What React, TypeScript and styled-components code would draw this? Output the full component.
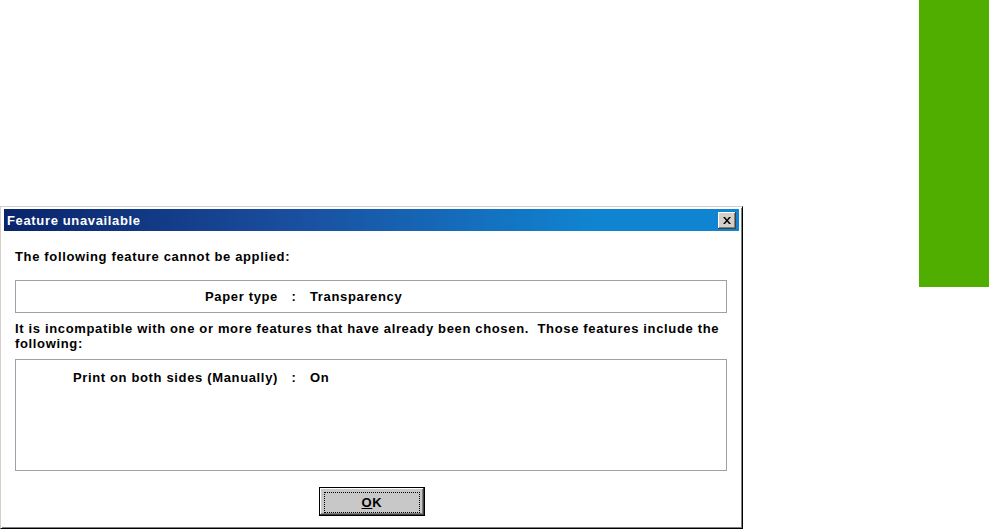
import styled, { createGlobalStyle } from 'styled-components';

const GlobalStyle = createGlobalStyle`
  html, body {
    margin: 0;
    padding: 0;
    background: #ffffff;
  }
  body {
    font-family: "Liberation Sans", Arial, sans-serif;
  }
`;

type Row = { label: string; value: string };

const chosen: Row[] = [{ label: 'Print on both sides (Manually)', value: 'On' }];

export default function App() {
  return (
    <>
      <GlobalStyle />
      <Page>
        <DialogColumn>
          <Dialog>
            <TitleBar>
              <TitleText>Feature unavailable</TitleText>
              <CloseButton type="button" aria-label="close">
                <svg width="8" height="7" viewBox="0 0 8 7">
                  <path d="M0 0h2l2 2.5L6 0h2L5 3.5 8 7H6L4 4.5 2 7H0l3-3.5z" fill="#000" />
                </svg>
              </CloseButton>
            </TitleBar>
            <Body>
              <Message>The following feature cannot be applied:</Message>
              <FeatureBox $height={33} $top={16} $pad={8}>
                <FeatureRow>
                  <Label>Paper type</Label>
                  <Colon>:</Colon>
                  <Value>Transparency</Value>
                </FeatureRow>
              </FeatureBox>
              <Message $top={8}>
                It is incompatible with one or more features that have already been chosen.&nbsp; Those features include the
                <br />
                following:
              </Message>
              <FeatureBox $height={112} $top={8} $pad={10}>
                {chosen.map((row) => (
                  <FeatureRow key={row.label}>
                    <Label>{row.label}</Label>
                    <Colon>:</Colon>
                    <Value>{row.value}</Value>
                  </FeatureRow>
                ))}
              </FeatureBox>
              <ButtonRow>
                <OkButton type="button">
                  <FocusRing>
                    <u>O</u>K
                  </FocusRing>
                </OkButton>
              </ButtonRow>
            </Body>
          </Dialog>
        </DialogColumn>
        <SideTab />
      </Page>
    </>
  );
}

const Page = styled.div`
  display: flex;
  width: 989px;
  height: 529px;
  overflow: hidden;
`;

const DialogColumn = styled.div`
  padding-top: 206px;
`;

const Dialog = styled.div`
  box-sizing: border-box;
  width: 743px;
  height: 323px;
  background: #ffffff;
  border-top: 1px solid #d4d0c8;
  border-left: 1px solid #d4d0c8;
  border-right: 1px solid #000000;
  border-bottom: 1px solid #000000;
  box-shadow: inset 1px 1px 0 #ffffff, inset -1px -1px 0 #808080;
  padding: 2px 3px 3px 3px;
  display: flex;
  flex-direction: column;
`;

const TitleBar = styled.div`
  height: 22px;
  display: flex;
  align-items: center;
  justify-content: space-between;
  padding: 0 3px 0 3px;
  background: linear-gradient(to right, #0a246a, #1a4fa0 40%, #1084d0 80%, #1084d0);
`;

const TitleText = styled.span`
  color: #ffffff;
  font-weight: bold;
  font-size: 13px;
  letter-spacing: 0.65px;
`;

const CloseButton = styled.button`
  box-sizing: border-box;
  width: 18px;
  height: 17px;
  padding: 0;
  display: flex;
  align-items: center;
  justify-content: center;
  background: #d4d0c8;
  border: none;
  box-shadow: inset -1px -1px 0 #404040, inset 1px 1px 0 #ffffff, inset -2px -2px 0 #808080;
`;

const Body = styled.div`
  flex: 1;
  display: flex;
  flex-direction: column;
  padding: 18px 12px 0 11px;
  font-size: 13px;
  letter-spacing: 0.65px;
  font-weight: bold;
  color: #000000;
`;

const Message = styled.div<{ $top?: number }>`
  margin-top: ${(p) => p.$top ?? 0}px;
  line-height: 15px;
`;

const FeatureBox = styled.div<{ $height: number; $top: number; $pad: number }>`
  box-sizing: border-box;
  height: ${(p) => p.$height}px;
  margin-top: ${(p) => p.$top}px;
  border: 1px solid #a0a0a0;
  padding-top: ${(p) => p.$pad}px;
`;

const FeatureRow = styled.div`
  display: grid;
  grid-template-columns: 262px 32px 1fr;
  line-height: 15px;
`;

const Label = styled.span`
  text-align: right;
`;

const Colon = styled.span`
  text-align: center;
`;

const Value = styled.span``;

const ButtonRow = styled.div`
  display: flex;
  justify-content: center;
  margin-top: 16px;
  padding-left: 2px;
`;

const OkButton = styled.button`
  box-sizing: border-box;
  width: 106px;
  height: 29px;
  padding: 4px;
  background: #c8c8c8;
  border: 1px solid #000000;
  box-shadow: inset -1px -1px 0 #404040, inset 1px 1px 0 #ffffff, inset -2px -2px 0 #808080;
  font-family: "Liberation Sans", Arial, sans-serif;
  font-size: 13px;
  font-weight: bold;
  letter-spacing: 0.65px;
  color: #000000;
`;

const FocusRing = styled.span`
  display: flex;
  align-items: center;
  justify-content: center;
  height: 100%;
  border: 1px dotted #000000;
`;

const SideTab = styled.div`
  margin-left: auto;
  width: 70px;
  height: 287px;
  background: #4fae00;
`;
